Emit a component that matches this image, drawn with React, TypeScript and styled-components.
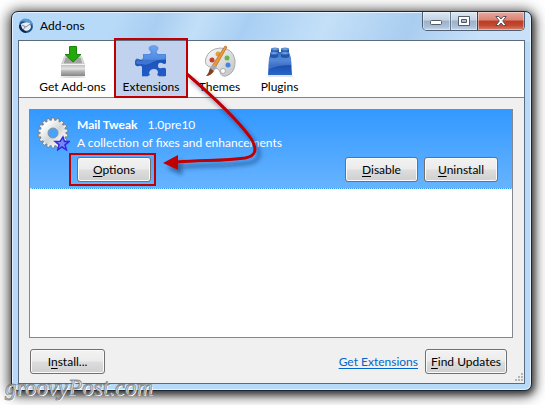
import React from "react";
import styled, { createGlobalStyle } from "styled-components";

const GlobalStyle = createGlobalStyle`
  * { box-sizing: border-box; }
  body {
    margin: 0;
    background: #fff;
    color: #000;
    font: 12px/16px Lato, "Open Sans", sans-serif;
  }
  button, a { font: inherit; color: inherit; }
`;

const Page = styled.div`
  position: relative;
  display: flex;
  min-height: 100vh;
  padding: 11px 13px 14px 11px;
  overflow: hidden;
`;

const Window = styled.main`
  position: relative;
  flex: 1;
  display: flex;
  flex-direction: column;
  padding: 0 6px 6px;
  border: 1px solid #1d2733;
  border-radius: 7px;
  background:
    linear-gradient(115deg, transparent 20%, #a9cef1 28%, #c2dff8 36%, #a8cff3 45%, #c4e0f8 60%, #a9cdf0 76%, #c8e1f9 90%) 0 0 / 100% 30px no-repeat,
    #b8daf9;
  box-shadow: inset 0 0 0 1px #e6f3fe, 2px 3px 6px rgba(0, 0, 0, 0.5), 0 2px 13px 3px rgba(0, 0, 0, 0.65);
`;

const TitleBar = styled.header`
  display: flex;
  align-items: flex-start;
  height: 28px;
`;

const Title = styled.h1`
  display: flex;
  align-items: center;
  gap: 6px;
  flex: 1;
  margin: 0;
  height: 28px;
  font-size: 12px;
  font-weight: 400;
`;

const WindowControls = styled.div`
  display: flex;
  height: 19px;
  border: 1px solid #4d5e73;
  border-top: 0;
  border-radius: 0 0 5px 5px;
  overflow: hidden;
`;

const ControlButton = styled.button<{ $close?: boolean }>`
  display: grid;
  place-items: center;
  width: ${(p) => (p.$close ? 47 : 27)}px;
  padding: 0;
  border: 0;
  border-left: 1px solid ${(p) => (p.$close ? "#7b2b22" : "#66788e")};
  background: ${(p) =>
    p.$close
      ? "linear-gradient(#e8aaa0, #da8374 45%, #bd3b25 50%, #c14a32 75%, #d9846b)"
      : "linear-gradient(#dce8f4, #c3d3e4 45%, #9db2c9 50%, #aabfd6 80%, #c3d7eb)"};
  box-shadow: inset 0 0 0 1px rgba(255, 255, 255, 0.4);
  &:first-child { border-left: 0; }
`;

const Content = styled.div`
  flex: 1;
  display: flex;
  flex-direction: column;
  border: 1px solid #5c6b80;
  background: #f0f0f0;
`;

const Toolbar = styled.nav`
  display: flex;
  height: 57px;
  padding-left: 11px;
  border-bottom: 1px solid #808389;
  background: #fff;
`;

const Tab = styled.button<{ $width: number; $active?: boolean }>`
  position: relative;
  display: flex;
  flex-direction: column;
  align-items: center;
  width: ${(p) => p.$width}px;
  padding: 3px 0 0;
  border: 0;
  background: ${(p) => (p.$active ? "#c1d2ee" : "transparent")};
  white-space: nowrap;
  svg { display: block; flex: none; margin-bottom: 1px; }
  ${(p) =>
    p.$active &&
    `&::after {
      content: "";
      position: absolute;
      inset: -3px -1px -1px;
      border: 2px solid #c00000;
    }`}
`;

const ExtensionList = styled.section`
  flex: 1;
  margin: 11px 11px 0 10px;
  border: 1px solid #828790;
  background: #fff;
`;

const ExtensionRow = styled.article`
  display: flex;
  gap: 7px;
  height: 79px;
  padding: 7px 14px 0 7px;
  border-bottom: 1px dotted #c5d9ee;
  background: linear-gradient(#3399ff, #66b3ff);
  color: #fff;
`;

const Details = styled.div`
  flex: 1;
  min-width: 0;
`;

const NameLine = styled.h2`
  display: flex;
  gap: 10px;
  margin: 0;
  font-size: 12px;
  line-height: 16px;
  span { font-weight: 400; }
`;

const Description = styled.p`
  margin: 2px 0 6px;
  line-height: 16px;
`;

const Actions = styled.div`
  display: flex;
  align-items: flex-start;
  gap: 6px;
`;

const Spacer = styled.div`
  flex: 1;
`;

const PushButton = styled.button<{ $width: number }>`
  width: ${(p) => p.$width}px;
  height: 25px;
  padding: 0;
  border: 1px solid #707070;
  border-radius: 3px;
  background: linear-gradient(#f3f3f3, #ebebeb 48%, #dddddd 52%, #cfcfcf);
  box-shadow: inset 0 0 0 1px #fafafa;
  color: #000;
  white-space: nowrap;
  u { text-underline-offset: 2px; }
`;

const OptionsFrame = styled.div`
  display: flex;
  margin: -4px 0 0 -8px;
  padding: 2px 3px 2px 6px;
  border: 2px solid #c00000;
`;

const Footer = styled.footer`
  display: flex;
  align-items: center;
  gap: 7px;
  padding: 11px 17px 9px 11px;
`;

const Link = styled.a`
  color: #0066cc;
  text-decoration: underline;
  text-underline-offset: 2px;
`;

const Grip = styled.svg`
  position: absolute;
  right: 8px;
  bottom: 9px;
`;

const Arrow = styled.svg`
  position: absolute;
  left: 145px;
  top: 56px;
  pointer-events: none;
`;

const Watermark = styled.div`
  position: absolute;
  left: 5px;
  bottom: 3px;
  font: italic 23px/28px "Liberation Serif", serif;
  color: rgba(225, 225, 225, 0.65);
  -webkit-text-stroke: 1px rgba(85, 85, 85, 0.6);
  text-shadow: 1px 1px 0 #fff;
  pointer-events: none;
`;

const ThunderbirdIcon = () => (
  <svg width="16" height="16" viewBox="0 0 16 16" aria-hidden="true">
    <circle cx="8" cy="8" r="7" fill="#1b4f8c" />
    <path d="M1 5Q4-1 10 1q5 2 5 8Q13 4 8 4 4 2 1 5Z" fill="#5a9dd4" />
    <path d="M3 6q5-3 9-1l1 4q-1 4-6 4-4-2-4-7Z" fill="#e9edf0" />
    <path d="m4 7 4 2 4-3M5 12l2-3" fill="none" stroke="#7d8993" />
    <path d="M2 7q0 6 6 7" fill="none" stroke="#0b2452" strokeWidth="2" />
  </svg>
);

const DownloadIcon = () => (
  <svg width="32" height="34" viewBox="0 0 32 34" aria-hidden="true">
    <defs>
      <linearGradient id="box" x2="0" y2="1">
        <stop stopColor="#d8d8d8" /><stop offset="1" stopColor="#969696" />
      </linearGradient>
      <linearGradient id="boxFront" x2="0" y2="1">
        <stop stopColor="#b5b5b5" /><stop offset=".4" stopColor="#e4e4e4" /><stop offset=".6" stopColor="#b5b5b5" /><stop offset="1" stopColor="#858585" />
      </linearGradient>
    </defs>
    <ellipse cx="16" cy="33" rx="13" ry="1" fill="#ddd" />
    <path d="M7 12h18l3 9v11H4V21Z" fill="url(#box)" />
    <path d="M8 13h16l2 7H6Z" fill="#a4a4a4" stroke="#e0e0e0" />
    <path d="M4 20h24v12H4Z" fill="url(#boxFront)" />
    <path d="M4 20.500h24" stroke="#f4f4f4" fill="none" />
    <path d="M12.500 2.500h7v8h4.500L16 18 8 10.500h4.500Z" fill="#25a80b" stroke="#16860a" />
  </svg>
);

const PuzzleIcon = () => (
  <svg width="32" height="34" viewBox="0 0 32 34" aria-hidden="true">
    <defs>
      <linearGradient id="puzzle" x2="0" y2="1">
        <stop stopColor="#72a5ec" /><stop offset=".45" stopColor="#3b7cdc" /><stop offset=".5" stopColor="#1c55b9" /><stop offset="1" stopColor="#2459c9" />
      </linearGradient>
    </defs>
    <path d="M8 10h6q3-1 1-3-3-3 0-5 4-2 7 0 3 2 0 5-1 2 1 3h8v9q-1 2-4 0-4-1-4 3 0 3 4 2 3-1 4 1v7h-7q-3-1-1-3 0-4-4-4t-5 4q2 2-1 3H7v-9q-1-2-3-1-4 1-4-3 0-6 4-4 3 2 4-1Z" fill="url(#puzzle)" />
    <path d="M9 11h6q4-1 1-5 0-3 3-3 4 0 3 3-3 4 1 5h7v4q-10 1-14 4-5 3-9 1-6 1-6-2 0-3 5-1 3-1 3-6Z" fill="#72a6ed" opacity=".4" />
    <path d="M7 32.500h6M24 32.500h6" stroke="#8fabd9" />
  </svg>
);

const PaletteIcon = () => (
  <svg width="32" height="34" viewBox="0 0 32 34" aria-hidden="true">
    <defs>
      <linearGradient id="palette" x2="1" y2="1">
        <stop stopColor="#fafafa" /><stop offset="1" stopColor="#bfc2c5" />
      </linearGradient>
    </defs>
    <path d="M2 14Q5 5 16 4q13 0 15 12 1 13-9 16-5 1-6-4-1-4-7-4-10-2-7-10Z" fill="url(#palette)" stroke="#a9adb1" />
    <circle cx="8" cy="16" r="2.500" fill="#c43c2b" />
    <circle cx="14" cy="10" r="2.500" fill="#e2a13b" />
    <circle cx="23" cy="14" r="2.500" fill="#69b54c" />
    <circle cx="24" cy="21" r="2.500" fill="#4386d8" />
    <circle cx="19" cy="27" r="2.500" fill="#fff" stroke="#aaa" />
    <path d="m21 2 2 1L11 24l-3-2Z" fill="#e99a36" stroke="#b5651f" strokeWidth=".7" />
    <path d="m9 20 4 3-3 4-4-3Z" fill="#a7aaad" />
    <path d="m6 24 4 3q-3 5-8 5Q5 29 6 24Z" fill="#843f20" />
  </svg>
);

const BrickIcon = () => (
  <svg width="32" height="34" viewBox="0 0 32 34" aria-hidden="true">
    <defs>
      <linearGradient id="brick" x2="0" y2="1">
        <stop stopColor="#2f68c0" /><stop offset=".3" stopColor="#5388d8" /><stop offset=".6" stopColor="#1c50b1" /><stop offset="1" stopColor="#2965c9" />
      </linearGradient>
    </defs>
    <path d="M7 8h18l2 6 1 17H4l1-17Z" fill="url(#brick)" />
    {[[7, 5], [17, 5], [6, 9], [17, 9]].map(([x, y]) => (
      <g key={`${x}-${y}`}>
        <path d={`M${x} ${y}v4q4 2 8 0v-4Z`} fill="#2256a9" />
        <ellipse cx={x + 4} cy={y} rx="4" ry="1.500" fill="#5388d2" />
        <ellipse cx={x + 4} cy={y} rx="2" ry=".6" fill="#8bb2e6" />
      </g>
    ))}
    <path d="M5 15q12 2 22 0v6q-13 0-22 4Z" fill="#6697df" opacity=".45" />
    <path d="M4 32h25" stroke="#c6cbd5" />
  </svg>
);

const GearIcon = () => (
  <svg width="33" height="34" viewBox="0 0 33 34" aria-hidden="true">
    <defs>
      <linearGradient id="gear" x1="0" y1="0" x2="1" y2="1">
        <stop stopColor="#fff" /><stop offset=".55" stopColor="#d4d6d6" /><stop offset="1" stopColor="#f5f5f5" />
      </linearGradient>
    </defs>
    {Array.from({ length: 18 }, (_, i) => (
      <path key={i} d="m14 5 .7-4h2.600l.7 4Z" fill="#eee" stroke="#777" strokeWidth=".8" transform={`rotate(${i * 20} 16 16)`} />
    ))}
    <circle cx="16" cy="16" r="8.500" fill="none" stroke="url(#gear)" strokeWidth="8" />
    <circle cx="16" cy="16" r="5" fill="#4ba1f7" stroke="#8096aa" />
    <path d="m26 20 1.500 4.500 4.500.1-4 3.200 1.400 5-4.400-2.800-4.200 2.800 1.200-5-4-3.400 5.200-.2Z" fill="#7587f2" stroke="#3527df" strokeWidth="1.500" />
  </svg>
);

const tabs = [
  { label: "Get Add-ons", width: 85, icon: <DownloadIcon /> },
  { label: "Extensions", width: 72, icon: <PuzzleIcon />, active: true },
  { label: "Themes", width: 65, icon: <PaletteIcon /> },
  { label: "Plugins", width: 55, icon: <BrickIcon /> },
];

export default function App() {
  return (
    <>
      <GlobalStyle />
      <Page>
        <Window>
          <TitleBar>
            <Title><ThunderbirdIcon />Add-ons</Title>
            <WindowControls>
              <ControlButton aria-label="Minimize">
                <svg width="13" height="7" viewBox="0 0 13 7"><rect x=".5" y="2.500" width="11" height="4" rx="1" fill="#fff" stroke="#515b69" /></svg>
              </ControlButton>
              <ControlButton aria-label="Maximize">
                <svg width="12" height="10" viewBox="0 0 12 10"><path d="M.5.5h11v9H.5ZM3.500 3.500v3h5v-3Z" fill="#fff" fillRule="evenodd" stroke="#515b69" /></svg>
              </ControlButton>
              <ControlButton $close aria-label="Close">
                <svg width="12" height="10" viewBox="0 0 12 10"><path d="M.8.5h3L6 3 8.200.5h3L7.700 5l3.500 4.500h-3L6 7 3.800 9.500h-3L4.300 5Z" fill="#fff" stroke="#56505b" /></svg>
              </ControlButton>
            </WindowControls>
          </TitleBar>
          <Content>
            <Toolbar>
              {tabs.map((tab) => (
                <Tab key={tab.label} $width={tab.width} $active={tab.active}>
                  {tab.icon}
                  {tab.label}
                </Tab>
              ))}
            </Toolbar>
            <ExtensionList>
              <ExtensionRow>
                <GearIcon />
                <Details>
                  <NameLine>Mail Tweak <span>1.0pre10</span></NameLine>
                  <Description>A collection of fixes and enhancements</Description>
                  <Actions>
                    <OptionsFrame><PushButton $width={74}><u>O</u>ptions</PushButton></OptionsFrame>
                    <Spacer />
                    <PushButton $width={73}><u>D</u>isable</PushButton>
                    <PushButton $width={74}><u>U</u>ninstall</PushButton>
                  </Actions>
                </Details>
              </ExtensionRow>
            </ExtensionList>
            <Footer>
              <PushButton $width={75}>I<u>n</u>stall...</PushButton>
              <Spacer />
              <Link href="#extensions">Get Extensions</Link>
              <PushButton $width={82}><u>F</u>ind Updates</PushButton>
            </Footer>
          </Content>
          <Grip width="8" height="8" viewBox="0 0 8 8" fill="#b5b5b5" aria-hidden="true">
            <path d="M6 0h2v2H6zM3 3h2v2H3zM6 3h2v2H6zM0 6h2v2H0zM3 6h2v2H3zM6 6h2v2H6z" />
          </Grip>
          <Arrow width="120" height="115" viewBox="157 68 120 115" aria-hidden="true">
            <defs>
              <filter id="arrowShadow" x="-20%" y="-20%" width="150%" height="150%">
                <feDropShadow dx="4" dy="5" stdDeviation="2" floodColor="#102c55" floodOpacity=".55" />
              </filter>
            </defs>
            <g filter="url(#arrowShadow)">
              <path d="M187 74C210 94 236 118 250 137Q262 155 245 158C225 161 205 160 176 162" fill="none" stroke="#c00000" strokeWidth="3" />
              <path d="m163 163 15-8v15Z" fill="#c00000" />
            </g>
          </Arrow>
        </Window>
        <Watermark>groovyPost.com</Watermark>
      </Page>
    </>
  );
}
